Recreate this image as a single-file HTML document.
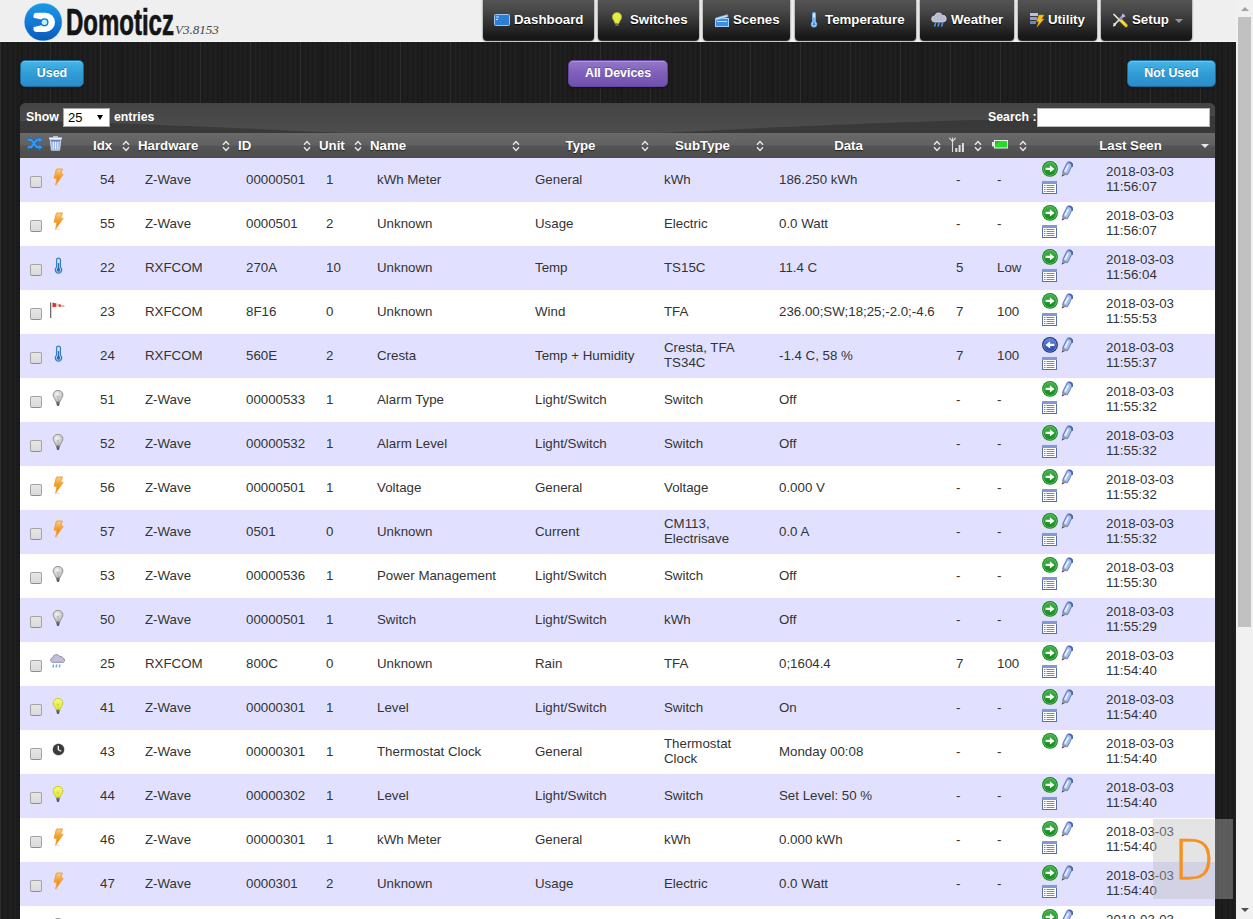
<!DOCTYPE html>
<html lang="en">
<head>
<meta charset="utf-8">
<title>Domoticz</title>
<style>
*{box-sizing:border-box}
html,body{margin:0;padding:0}
body{width:1253px;height:919px;overflow:hidden;position:relative;font-family:"Liberation Sans",Arial,sans-serif;font-size:13.3px;color:#333;
background-color:#1d1d1d;
background-image:repeating-linear-gradient(90deg,rgba(255,255,255,.018) 0 1px,rgba(0,0,0,0) 1px 2px,rgba(0,0,0,.10) 2px 3px,rgba(0,0,0,0) 3px 5px),repeating-linear-gradient(90deg,rgba(255,255,255,.05) 0 1px,rgba(0,0,0,0) 1px 20px,rgba(0,0,0,.12) 20px 22px,rgba(0,0,0,0) 22px 50px)}
#page{position:absolute;left:0;top:0;width:1236px;height:919px;overflow:hidden}
#topbar{position:absolute;left:0;top:0;width:1236px;height:42px;background:#efefef;border-bottom:1px solid #f6f6f6}
#logo{position:absolute;left:24px;top:3px;width:38px;height:38px;overflow:visible}
#brand{position:absolute;left:66px;top:2px;-webkit-text-stroke:.7px #141414;font-weight:bold;font-size:36px;line-height:42px;color:#141414;transform:scaleX(.666);transform-origin:0 0;white-space:nowrap;letter-spacing:0}
#ver{position:absolute;left:175px;top:22px;font-family:"Liberation Serif",Georgia,serif;font-style:italic;font-size:13px;line-height:16px;color:#444;white-space:nowrap}
.nav{position:absolute;top:0;height:41px;border-radius:0 0 4px 4px;background:linear-gradient(#545454 0,#484848 25%,#303030 58%,#191919 88%,#141414 100%);box-shadow:0 0 2px rgba(0,0,0,.75), inset 0 -1px 0 rgba(255,255,255,.10);color:#fff;font-weight:bold;font-size:13.3px;line-height:40px;white-space:nowrap;text-shadow:0 1px 1px #000}
.nav svg{position:absolute;left:11px;top:12px;width:16px;height:16px}
.nav span{position:absolute;top:0}
.btn{position:absolute;top:60px;height:27px;border-radius:5px;color:#fff;font-weight:bold;font-size:12.4px;line-height:24px;text-align:center;text-shadow:0 -1px 0 rgba(0,0,0,.3);box-shadow:inset 0 1px 0 rgba(255,255,255,.25),0 1px 2px rgba(0,0,0,.4)}
.btn.blue{background:linear-gradient(#46b5e5,#319cd6 50%,#2a8dca);border:1px solid #1a6a9c}
.btn.purple{background:linear-gradient(#9278c8,#7d5fba 50%,#7050ae);border:1px solid #6346a0}
#panel{position:absolute;left:20px;top:103px;width:1195px;height:830px;background:#4a4a4a;border-radius:6px 6px 0 0;overflow:hidden}
#pbar{position:absolute;left:0;top:0;width:1195px;height:30px;background:linear-gradient(#3c3c3c,#4e4e4e 45%,#454545 50%,#3b3b3b);color:#fff;font-weight:bold;font-size:12.3px;line-height:28px}
#pbar .show{position:absolute;left:6px;top:0}
#pbar .ent{position:absolute;left:94px;top:0}
#sel{position:absolute;left:43px;top:5px;width:47px;height:19px;background:#fff;border:1px solid #a9a9a9;color:#000;font-weight:normal;font-size:13px;line-height:17px;padding-left:4px;text-shadow:none}
#sel i{position:absolute;right:6px;top:6px;width:0;height:0;border-left:3px solid transparent;border-right:3px solid transparent;border-top:5.500px solid #000}
#pbar .srch{position:absolute;left:968px;top:0}
#sin{position:absolute;left:1017px;top:5px;width:173px;height:19px;background:#fff;border:1px solid #bbb}
table{position:absolute;left:0;top:30px;width:1195px;border-collapse:collapse;table-layout:fixed;border-spacing:0}
th{height:25px;padding:0;background:linear-gradient(#696969,#616161 46%,#545454 54%,#4c4c4c);color:#fff;font-weight:bold;font-size:13.25px;line-height:25px;text-align:left;position:relative;white-space:nowrap;text-shadow:0 1px 1px rgba(0,0,0,.6);overflow:visible}
th .l{position:absolute;left:7px;top:0}
th .c{display:block;text-align:center;padding-right:10px}
th .s{position:absolute;right:1.500px;top:7px;width:8px;height:12px}
td{height:44px;padding:0 0 2px 14px;vertical-align:middle;font-size:13.3px;line-height:15px;color:#333;white-space:nowrap;overflow:hidden}
tr.odd td{background:#e1e1ff}
tr.even td{background:#fff}
td.cd{padding-left:15px}
td.c0{padding:0;position:relative}
.cb{position:absolute;left:10px;top:18px;width:12px;height:12px;border:1px solid #a3a3a3;border-bottom-color:#8e8e8e;border-radius:2px;background:linear-gradient(#e6e6e6,#dadada)}
.di{position:absolute;left:30px;top:10px;width:16px;height:18px}
td.ci{padding:0 0 2px 14px}
td.cc{padding:0 0 2px 14px}
td.cb2{padding:0 0 2px 14px}
td.cl{padding:0;position:relative}
.acts{position:absolute;left:14px;top:3px;line-height:0}
.a16{width:16px;height:16px;vertical-align:top}
.pen{width:12px;height:16px;margin-left:3px;vertical-align:top}
.log{width:15px;height:13px;margin-top:4px;vertical-align:top}
.dt{position:absolute;left:78px;top:6px;line-height:15px}
#sb{position:absolute;left:1236px;top:0;width:17px;height:919px;background:#f1f1f1}
#sb .th{position:absolute;left:2px;top:17px;width:13px;height:610px;background:#c1c1c1}
#sb .up{position:absolute;left:4.5px;top:7px;width:0;height:0;border-left:4px solid transparent;border-right:4px solid transparent;border-bottom:4px solid #a3a3a3}
#sb .dn{position:absolute;left:4.5px;top:908px;width:0;height:0;border-left:4px solid transparent;border-right:4px solid transparent;border-top:4px solid #505050}
#wm{position:absolute;left:1153px;top:819px;width:80px;height:80px;background:rgba(187,187,187,.4)}
#wm svg{position:absolute;left:0;top:0}
</style>
</head>
<body>
<svg width="0" height="0" style="position:absolute">
<defs>
<linearGradient id="lg" x1="0" y1="0" x2="0" y2="1"><stop offset="0" stop-color="#1a9ae6"/><stop offset=".5" stop-color="#137bd6"/><stop offset="1" stop-color="#0d58bd"/></linearGradient>
<linearGradient id="gg" x1="0" y1="0" x2="0" y2="1"><stop offset="0" stop-color="#3fb247"/><stop offset="1" stop-color="#0f8a1c"/></linearGradient>
<linearGradient id="bg" x1="0" y1="0" x2="0" y2="1"><stop offset="0" stop-color="#5e86d6"/><stop offset="1" stop-color="#2a4aa6"/></linearGradient>
<radialGradient id="wg" cx=".4" cy=".35" r=".7"><stop offset="0" stop-color="#f4f4f4"/><stop offset="1" stop-color="#b4b4b4"/></radialGradient><linearGradient id="yg" x1="0" y1="0" x2="0" y2="1"><stop offset="0" stop-color="#f6fb7a"/><stop offset="1" stop-color="#dfe63a"/></linearGradient>
<linearGradient id="og" x1="0" y1="0" x2="0" y2="1"><stop offset="0" stop-color="#fdd08a"/><stop offset=".5" stop-color="#f59a1e"/><stop offset="1" stop-color="#e86e10"/></linearGradient>
<symbol id="i-sort" viewBox="0 0 8 12"><path d="M1 4.8 L4 1.6 L7 4.8" fill="none" stroke="#e8e8e8" stroke-width="1.4"/><path d="M1 7.2 L4 10.4 L7 7.2" fill="none" stroke="#e8e8e8" stroke-width="1.4"/></symbol>
<symbol id="i-go" viewBox="0 0 16 16"><circle cx="8" cy="7.900" r="7.900" fill="#15801f"/><circle cx="8" cy="7.900" r="6.900" fill="#62c766"/><circle cx="8" cy="7.900" r="6.100" fill="url(#gg)"/><path d="M3.600 6.700h4.300V4.300L12.500 7.900l-4.600 3.600V9.100H3.600z" fill="#fff"/></symbol>
<symbol id="i-back" viewBox="0 0 16 16"><circle cx="8" cy="7.900" r="7.900" fill="#1a2c6c"/><circle cx="8" cy="7.900" r="6.800" fill="#6f90dc"/><circle cx="8" cy="7.900" r="6.100" fill="url(#bg)"/><path d="M12.400 6.700H8.100V4.300L3.500 7.900l4.600 3.600V9.100h4.300z" fill="#fff"/></symbol>
<symbol id="i-pen" viewBox="0 0 12 16"><path d="M8.300 3.700 4.700 10.900" stroke="#6680c2" stroke-width="6.600" stroke-linecap="round" fill="none"/><path d="M8.100 4.400 4.900 10.800" stroke="#a9bde9" stroke-width="4.600" stroke-linecap="round" fill="none"/><path d="M7 4.800 4.400 10" stroke="#e9effb" stroke-width="1.700" stroke-linecap="round" fill="none"/><path d="M9.200 1.600a3.200 3.200 0 0 1 2.100 3.400" stroke="#4c68b2" stroke-width="1.800" fill="none" stroke-linecap="round"/><path d="M.8 15.500l1-4.500 4.500 2.300z" fill="#8f8f94"/><path d="M.8 15.500l.4-2 1.800 1z" fill="#48484c"/></symbol>
<symbol id="i-log" viewBox="0 0 15 13"><rect x=".5" y=".5" width="14" height="12" fill="#fff" stroke="#5870a8" stroke-width="1"/><rect x="0" y="0" width="15" height="3" fill="#7f9ad4"/><path d="M2 4.500h1.500M4.500 4.500h8M2 6.500h1.500M4.500 6.500h8M2 8.500h1.500M4.500 8.500h8M2 10.500h1.500M4.500 10.500h8" stroke="#8488a0" stroke-width="1"/></symbol>
<symbol id="i-bolt" viewBox="0 0 16 18"><path d="M6.500 1h6l-2 5.200h2.700L5.700 17l1.300-6.800H4z" fill="url(#og)" stroke="#f0a43c" stroke-width="1" stroke-linejoin="round"/><path d="M4.500 17.300h5" stroke="#d8dcec" stroke-width="1"/></symbol>
<symbol id="i-temp" viewBox="0 0 16 18"><path d="M6.600 4a1.900 1.900 0 0 1 3.800 0v7.300a3.200 3.200 0 1 1-3.800 0z" fill="#d6e8f8" stroke="#3a7fc0" stroke-width="1.300"/><circle cx="8.500" cy="13.900" r="1.900" fill="#2a6fb4"/><path d="M8.500 7v6" stroke="#2a6fb4" stroke-width="1.400"/></symbol>
<symbol id="i-wind" viewBox="0 0 16 18"><path d="M.7 2.500V18" stroke="#555" stroke-width="1.100"/><path d="M2.500 2.600l4 .900v3.300l-4 .5z" fill="#d43a32"/><path d="M6.500 3.500l2.200.6v2.600l-2.200.1z" fill="#f1c9c6"/><path d="M8.700 4.100l2.300.7v1.900l-2.300.1z" fill="#d43a32"/><path d="M11 4.800l1.500.5v1.300l-1.500.1z" fill="#f1c9c6"/><path d="M12.500 5.300l2 .8v.5l-2 0z" fill="#d43a32"/></symbol>
<symbol id="i-off" viewBox="0 0 16 18"><path d="M8 2.400c2.900 0 4.900 2.100 4.900 4.600 0 2.500-2.300 4-3 6.800H6.100c-.7-2.800-3-4.300-3-6.800C3.100 4.500 5.100 2.400 8 2.400z" fill="url(#wg)" stroke="#8e8e8e" stroke-width=".9"/><path d="M8 7.500v5.500M6.500 8l1.500 1.500L9.500 8" fill="none" stroke="#b0b0b0" stroke-width=".7"/><rect x="6.300" y="13.800" width="3.400" height="2.600" fill="#6a6a72"/><path d="M6.900 17h2.200" stroke="#2e2e3a" stroke-width="1.400"/></symbol>
<symbol id="i-on" viewBox="0 0 16 18"><path d="M8 2.400c2.900 0 4.900 2.100 4.900 4.600 0 2.500-2.300 4-3 6.800H6.100c-.7-2.800-3-4.300-3-6.800C3.100 4.500 5.100 2.400 8 2.400z" fill="url(#yg)" stroke="#c4c428" stroke-width=".9"/><path d="M8 7.500v5.500M6.500 8l1.500 1.500L9.500 8" fill="none" stroke="#d8d040" stroke-width=".7"/><rect x="6.300" y="13.800" width="3.400" height="2.600" fill="#6a6a72"/><path d="M6.900 17h2.200" stroke="#2e2e3a" stroke-width="1.400"/></symbol>
<symbol id="i-rain" viewBox="0 0 16 18"><path d="M2.300 10.300a2.300 2.300 0 0 1 .5-4.500 3.600 3.600 0 0 1 6.600-1.600 3 3 0 0 1 3.400 2 2.200 2.200 0 0 1 .6 4.100z" fill="#c4c0da" stroke="#8681a8" stroke-width=".9"/><path d="M3.600 12.500l-.7 3M6.800 12.500l-.7 3M10 12.500l-.7 3" stroke="#78aecb" stroke-width="1.500"/></symbol>
<symbol id="i-clock" viewBox="0 0 16 18"><circle cx="8.500" cy="9.500" r="6.300" fill="#bdbdbd" opacity=".5"/><circle cx="8.500" cy="9.500" r="5.700" fill="#3c3c3c"/><path d="M8.300 5.800v3.900l2.900 1.600" stroke="#fff" stroke-width="1.300" fill="none"/></symbol>
</defs>
</svg>
<div id="page">
<div id="topbar">
<svg id="logo" viewBox="0 0 38 38"><circle cx="19.200" cy="19" r="19.100" fill="#8fd0f6"/><circle cx="19.200" cy="19" r="18.600" fill="url(#lg)"/><path d="M12.700 9.800H21.400A9.550 9.550 0 0 1 21.400 28.900H12.700A3.200 3.200 0 0 1 9.500 25.700V13A3.200 3.200 0 0 1 12.700 9.800Z" fill="#fff"/><path d="M8 14.400 17.500 16.500V22.200L8 24.600Z" fill="#1579d4"/><circle cx="20.400" cy="19.300" r="4.100" fill="#1672cf"/><circle cx="20.400" cy="19.300" r="2.700" fill="#b9f0fd"/></svg>
<div id="brand">Domoticz</div>
<div id="ver">V3.8153</div>
</div>
<div class="nav" style="left:483px;width:111px"><svg viewBox="0 0 16 16"><rect x=".5" y="2.500" width="15" height="11" rx="1" fill="#2b7fd6" stroke="#9cc6f2" stroke-width="1"/><path d="M2 5h3M2 7.500h2" stroke="#d6ebff" stroke-width="1"/></svg><span style="left:31px">Dashboard</span></div>
<div class="nav" style="left:598px;width:101px"><svg viewBox="0 0 16 16"><path d="M8 .6c2.700 0 4.600 2 4.600 4.400 0 2.400-2.200 3.800-2.800 6.500H6.200C5.600 8.800 3.400 7.400 3.400 5 3.400 2.600 5.300.6 8 .6z" fill="#e4ea4a" stroke="#b4bb24" stroke-width=".8"/><rect x="6.400" y="11.600" width="3.200" height="2.600" fill="#6e6e66"/><path d="M6.900 15h2.200" stroke="#26262a" stroke-width="1.400"/></svg><span style="left:32px">Switches</span></div>
<div class="nav" style="left:703px;width:87px"><svg viewBox="0 0 16 16"><rect x="1.500" y="6.500" width="13" height="8" fill="#3f8ee6" stroke="#a9d0f8" stroke-width="1"/><path d="M1.500 6l12-3.500.6 2.200-12 3.500z" fill="#cfe4fb" stroke="#5a9be6" stroke-width=".6"/><path d="M3 9.500h10" stroke="#bcdcff" stroke-width="1"/></svg><span style="left:30px">Scenes</span></div>
<div class="nav" style="left:795px;width:121px"><svg viewBox="0 0 16 16"><path d="M6.600 2a1.400 1.400 0 0 1 2.800 0v8a2.700 2.700 0 1 1-2.800 0z" fill="#e4f0fc" stroke="#6fb0ee" stroke-width="1.100"/><circle cx="8" cy="12.300" r="1.500" fill="#3b86d8"/><path d="M8 5.500v6" stroke="#3b86d8" stroke-width="1.100"/></svg><span style="left:30px">Temperature</span></div>
<div class="nav" style="left:920px;width:94px"><svg viewBox="0 0 16 16"><path d="M3.500 10a3 3 0 0 1 .3-6 4 4 0 0 1 7.600-.6 3.200 3.200 0 0 1 1 6.600z" fill="#b9bdd2" stroke="#d9dcea" stroke-width=".8"/><path d="M4.500 11.500l-.8 2.500M8 11.500l-.8 2.500M11.500 11.500l-.8 2.500" stroke="#4e9cf0" stroke-width="1.500" stroke-linecap="round"/></svg><span style="left:31px">Weather</span></div>
<div class="nav" style="left:1018px;width:79px"><svg viewBox="0 0 16 16"><rect x="1" y="1" width="8" height="3" fill="#b8c2dc"/><rect x="1" y="5" width="7" height="3" fill="#8da0d0"/><rect x="1" y="9" width="6" height="3" fill="#6f86c4"/><path d="M10 3h5l-2.500 4h2.500L8 15l1.800-5.500H7.500z" fill="#f6c11c" stroke="#d99a0a" stroke-width=".5"/></svg><span style="left:30px">Utility</span></div>
<div class="nav" style="left:1101px;width:91px"><svg viewBox="0 0 16 16"><path d="M2 2.500 8.500 9" stroke="#e9e9e9" stroke-width="1.700" stroke-linecap="round"/><path d="M8 7.500 14 13.500" stroke="#e8c21c" stroke-width="3.200" stroke-linecap="round"/><path d="M8.500 8 13 12.500" stroke="#f7e36a" stroke-width="1.100" stroke-linecap="round"/><path d="M3 12 8.500 6.500" stroke="#e4e4e4" stroke-width="1.700" stroke-linecap="round"/><path d="M1.200 11.800l1.800.2.200 1.800M1.300 14.300l1.500-1.500" stroke="#ededed" stroke-width="1.300" fill="none"/><path d="M8.500 6.500 11.500 3.500" stroke="#9a8fd0" stroke-width="2.600" stroke-linecap="round"/><path d="M10.800 1.800v2.400h2.400" stroke="#c9c2ee" stroke-width="1.200" fill="none"/></svg><span style="left:31px">Setup</span><i style="position:absolute;left:73.500px;top:19px;width:0;height:0;border-left:4px solid transparent;border-right:4px solid transparent;border-top:4px solid #959595"></i></div>

<div class="btn blue" style="left:20px;width:64px">Used</div>
<div class="btn purple" style="left:568px;width:100px">All Devices</div>
<div class="btn blue" style="left:1127px;width:89px">Not Used</div>

<div id="panel">
<div id="pbar"><svg style="position:absolute;left:0;top:0" width="1195" height="30" viewBox="0 0 1195 30"><defs><linearGradient id="pg" x1="0" y1="0" x2="0" y2="1"><stop offset="0" stop-color="#444"/><stop offset="1" stop-color="#4d4d4d"/></linearGradient></defs><rect width="1195" height="30" fill="url(#pg)"/><path d="M0 18C120 20 230 26 330 30H0Z" fill="#393939"/><path d="M640 30C800 22 950 15 1195 13V30Z" fill="#393939"/></svg><span class="show">Show</span><span id="sel">25<i></i></span><span class="ent">entries</span><span class="srch">Search :</span><span id="sin"></span></div>
<table>
<colgroup><col style="width:66px"><col style="width:45px"><col style="width:100px"><col style="width:81px"><col style="width:51px"><col style="width:158px"><col style="width:129px"><col style="width:115px"><col style="width:177px"><col style="width:41px"><col style="width:45px"><col style="width:187px"></colgroup>
<thead><tr>
<th><svg style="position:absolute;left:7px;top:3px;width:16px;height:15px" viewBox="0 0 16 15"><path d="M.8 3.800h3.400l5.600 7.400h3M.8 11.200h3.400l5.600-7.400h3" fill="none" stroke="#1d6fc0" stroke-width="3.200"/><path d="M11.600 0l4.400 3.800-4.400 3.800zM11.600 7.400l4.400 3.800-4.400 3.800z" fill="#1d6fc0"/><path d="M.8 3.800h3.400l5.600 7.400h3M.8 11.200h3.400l5.600-7.400h3" fill="none" stroke="#3a9cee" stroke-width="1.800"/><path d="M12.200 1.400l2.800 2.400-2.800 2.400zM12.200 8.800l2.800 2.400-2.800 2.400z" fill="#3a9cee"/></svg><svg style="position:absolute;left:28px;top:3px;width:15px;height:15px" viewBox="0 0 15 15"><path d="M1 2.300h13" stroke="#eef2fa" stroke-width="1.800"/><path d="M5 .9h5" stroke="#dfe6f4" stroke-width="1.400"/><path d="M2.200 3.600h10.600l-1.200 10.600H3.400z" fill="#9db6e2" stroke="#d5def2" stroke-width=".9"/><path d="M5.300 5v8M7.500 5v8M9.700 5v8" stroke="#e6edfb" stroke-width="1.100"/><path d="M2.800 4.100h9.400l-.2 1.500H3z" fill="#5d7fc4"/></svg></th>
<th><span class="l">Idx</span><svg class="s"><use href="#i-sort"/></svg></th>
<th><span class="l">Hardware</span><svg class="s"><use href="#i-sort"/></svg></th>
<th><span class="l">ID</span><svg class="s"><use href="#i-sort"/></svg></th>
<th><span class="l">Unit</span><svg class="s"><use href="#i-sort"/></svg></th>
<th><span class="l">Name</span><svg class="s"><use href="#i-sort"/></svg></th>
<th><span class="c">Type</span><svg class="s"><use href="#i-sort"/></svg></th>
<th><span class="c">SubType</span><svg class="s"><use href="#i-sort"/></svg></th>
<th><span class="c">Data</span><svg class="s"><use href="#i-sort"/></svg></th>
<th><svg style="position:absolute;left:7px;top:4px;width:16px;height:16px" viewBox="0 0 16 16"><path d="M3.500 .5v14.500M.3 .8l3.200 3.600 3.200-3.600" fill="none" stroke="#dcdcdc" stroke-width="1.100"/><path d="M7.300 11v4M10.600 8v7M13.900 6v9" stroke="#e2e2e2" stroke-width="2"/></svg><svg class="s"><use href="#i-sort"/></svg></th>
<th><svg style="position:absolute;left:9px;top:7px;width:16px;height:8.500px" viewBox="0 0 16 8.500"><rect x="0" y="2" width="2.500" height="4.500" fill="#e8e8e8"/><rect x="2.500" y=".5" width="13" height="7.500" fill="#25dd25" stroke="#efefef" stroke-width="1"/><path d="M3 1h5L3 5z" fill="#1a9a1a" opacity=".55"/></svg><svg class="s"><use href="#i-sort"/></svg></th>
<th><span class="c" style="padding-right:0;padding-left:18px">Last Seen</span><i style="position:absolute;right:6px;top:11px;width:0;height:0;border-left:4px solid transparent;border-right:4px solid transparent;border-top:4px solid #e8e8e8"></i></th>
</tr></thead>
<tbody>

<tr class="odd"><td class="c0"><span class="cb"></span><svg class="di"><use href="#i-bolt"/></svg></td><td class="ci">54</td><td>Z-Wave</td><td class="cd">00000501</td><td>1</td><td>kWh Meter</td><td>General</td><td>kWh</td><td>186.250 kWh</td><td class="cc">-</td><td class="cb2">-</td><td class="cl"><span class="acts"><svg class="a16"><use href="#i-go"/></svg><svg class="pen"><use href="#i-pen"/></svg><br><svg class="log"><use href="#i-log"/></svg></span><span class="dt">2018-03-03<br>11:56:07</span></td></tr>
<tr class="even"><td class="c0"><span class="cb"></span><svg class="di"><use href="#i-bolt"/></svg></td><td class="ci">55</td><td>Z-Wave</td><td class="cd">0000501</td><td>2</td><td>Unknown</td><td>Usage</td><td>Electric</td><td>0.0 Watt</td><td class="cc">-</td><td class="cb2">-</td><td class="cl"><span class="acts"><svg class="a16"><use href="#i-go"/></svg><svg class="pen"><use href="#i-pen"/></svg><br><svg class="log"><use href="#i-log"/></svg></span><span class="dt">2018-03-03<br>11:56:07</span></td></tr>
<tr class="odd"><td class="c0"><span class="cb"></span><svg class="di"><use href="#i-temp"/></svg></td><td class="ci">22</td><td>RXFCOM</td><td class="cd">270A</td><td>10</td><td>Unknown</td><td>Temp</td><td>TS15C</td><td>11.4 C</td><td class="cc">5</td><td class="cb2">Low</td><td class="cl"><span class="acts"><svg class="a16"><use href="#i-go"/></svg><svg class="pen"><use href="#i-pen"/></svg><br><svg class="log"><use href="#i-log"/></svg></span><span class="dt">2018-03-03<br>11:56:04</span></td></tr>
<tr class="even"><td class="c0"><span class="cb"></span><svg class="di"><use href="#i-wind"/></svg></td><td class="ci">23</td><td>RXFCOM</td><td class="cd">8F16</td><td>0</td><td>Unknown</td><td>Wind</td><td>TFA</td><td>236.00;SW;18;25;-2.0;-4.6</td><td class="cc">7</td><td class="cb2">100</td><td class="cl"><span class="acts"><svg class="a16"><use href="#i-go"/></svg><svg class="pen"><use href="#i-pen"/></svg><br><svg class="log"><use href="#i-log"/></svg></span><span class="dt">2018-03-03<br>11:55:53</span></td></tr>
<tr class="odd"><td class="c0"><span class="cb"></span><svg class="di"><use href="#i-temp"/></svg></td><td class="ci">24</td><td>RXFCOM</td><td class="cd">560E</td><td>2</td><td>Cresta</td><td>Temp + Humidity</td><td>Cresta, TFA<br>TS34C</td><td>-1.4 C, 58 %</td><td class="cc">7</td><td class="cb2">100</td><td class="cl"><span class="acts"><svg class="a16"><use href="#i-back"/></svg><svg class="pen"><use href="#i-pen"/></svg><br><svg class="log"><use href="#i-log"/></svg></span><span class="dt">2018-03-03<br>11:55:37</span></td></tr>
<tr class="even"><td class="c0"><span class="cb"></span><svg class="di"><use href="#i-off"/></svg></td><td class="ci">51</td><td>Z-Wave</td><td class="cd">00000533</td><td>1</td><td>Alarm Type</td><td>Light/Switch</td><td>Switch</td><td>Off</td><td class="cc">-</td><td class="cb2">-</td><td class="cl"><span class="acts"><svg class="a16"><use href="#i-go"/></svg><svg class="pen"><use href="#i-pen"/></svg><br><svg class="log"><use href="#i-log"/></svg></span><span class="dt">2018-03-03<br>11:55:32</span></td></tr>
<tr class="odd"><td class="c0"><span class="cb"></span><svg class="di"><use href="#i-off"/></svg></td><td class="ci">52</td><td>Z-Wave</td><td class="cd">00000532</td><td>1</td><td>Alarm Level</td><td>Light/Switch</td><td>Switch</td><td>Off</td><td class="cc">-</td><td class="cb2">-</td><td class="cl"><span class="acts"><svg class="a16"><use href="#i-go"/></svg><svg class="pen"><use href="#i-pen"/></svg><br><svg class="log"><use href="#i-log"/></svg></span><span class="dt">2018-03-03<br>11:55:32</span></td></tr>
<tr class="even"><td class="c0"><span class="cb"></span><svg class="di"><use href="#i-bolt"/></svg></td><td class="ci">56</td><td>Z-Wave</td><td class="cd">00000501</td><td>1</td><td>Voltage</td><td>General</td><td>Voltage</td><td>0.000 V</td><td class="cc">-</td><td class="cb2">-</td><td class="cl"><span class="acts"><svg class="a16"><use href="#i-go"/></svg><svg class="pen"><use href="#i-pen"/></svg><br><svg class="log"><use href="#i-log"/></svg></span><span class="dt">2018-03-03<br>11:55:32</span></td></tr>
<tr class="odd"><td class="c0"><span class="cb"></span><svg class="di"><use href="#i-bolt"/></svg></td><td class="ci">57</td><td>Z-Wave</td><td class="cd">0501</td><td>0</td><td>Unknown</td><td>Current</td><td>CM113,<br>Electrisave</td><td>0.0 A</td><td class="cc">-</td><td class="cb2">-</td><td class="cl"><span class="acts"><svg class="a16"><use href="#i-go"/></svg><svg class="pen"><use href="#i-pen"/></svg><br><svg class="log"><use href="#i-log"/></svg></span><span class="dt">2018-03-03<br>11:55:32</span></td></tr>
<tr class="even"><td class="c0"><span class="cb"></span><svg class="di"><use href="#i-off"/></svg></td><td class="ci">53</td><td>Z-Wave</td><td class="cd">00000536</td><td>1</td><td>Power Management</td><td>Light/Switch</td><td>Switch</td><td>Off</td><td class="cc">-</td><td class="cb2">-</td><td class="cl"><span class="acts"><svg class="a16"><use href="#i-go"/></svg><svg class="pen"><use href="#i-pen"/></svg><br><svg class="log"><use href="#i-log"/></svg></span><span class="dt">2018-03-03<br>11:55:30</span></td></tr>
<tr class="odd"><td class="c0"><span class="cb"></span><svg class="di"><use href="#i-off"/></svg></td><td class="ci">50</td><td>Z-Wave</td><td class="cd">00000501</td><td>1</td><td>Switch</td><td>Light/Switch</td><td>kWh</td><td>Off</td><td class="cc">-</td><td class="cb2">-</td><td class="cl"><span class="acts"><svg class="a16"><use href="#i-go"/></svg><svg class="pen"><use href="#i-pen"/></svg><br><svg class="log"><use href="#i-log"/></svg></span><span class="dt">2018-03-03<br>11:55:29</span></td></tr>
<tr class="even"><td class="c0"><span class="cb"></span><svg class="di"><use href="#i-rain"/></svg></td><td class="ci">25</td><td>RXFCOM</td><td class="cd">800C</td><td>0</td><td>Unknown</td><td>Rain</td><td>TFA</td><td>0;1604.4</td><td class="cc">7</td><td class="cb2">100</td><td class="cl"><span class="acts"><svg class="a16"><use href="#i-go"/></svg><svg class="pen"><use href="#i-pen"/></svg><br><svg class="log"><use href="#i-log"/></svg></span><span class="dt">2018-03-03<br>11:54:40</span></td></tr>
<tr class="odd"><td class="c0"><span class="cb"></span><svg class="di"><use href="#i-on"/></svg></td><td class="ci">41</td><td>Z-Wave</td><td class="cd">00000301</td><td>1</td><td>Level</td><td>Light/Switch</td><td>Switch</td><td>On</td><td class="cc">-</td><td class="cb2">-</td><td class="cl"><span class="acts"><svg class="a16"><use href="#i-go"/></svg><svg class="pen"><use href="#i-pen"/></svg><br><svg class="log"><use href="#i-log"/></svg></span><span class="dt">2018-03-03<br>11:54:40</span></td></tr>
<tr class="even"><td class="c0"><span class="cb"></span><svg class="di"><use href="#i-clock"/></svg></td><td class="ci">43</td><td>Z-Wave</td><td class="cd">00000301</td><td>1</td><td>Thermostat Clock</td><td>General</td><td>Thermostat<br>Clock</td><td>Monday 00:08</td><td class="cc">-</td><td class="cb2">-</td><td class="cl"><span class="acts"><svg class="a16"><use href="#i-go"/></svg><svg class="pen"><use href="#i-pen"/></svg></span><span class="dt">2018-03-03<br>11:54:40</span></td></tr>
<tr class="odd"><td class="c0"><span class="cb"></span><svg class="di"><use href="#i-on"/></svg></td><td class="ci">44</td><td>Z-Wave</td><td class="cd">00000302</td><td>1</td><td>Level</td><td>Light/Switch</td><td>Switch</td><td>Set Level: 50 %</td><td class="cc">-</td><td class="cb2">-</td><td class="cl"><span class="acts"><svg class="a16"><use href="#i-go"/></svg><svg class="pen"><use href="#i-pen"/></svg><br><svg class="log"><use href="#i-log"/></svg></span><span class="dt">2018-03-03<br>11:54:40</span></td></tr>
<tr class="even"><td class="c0"><span class="cb"></span><svg class="di"><use href="#i-bolt"/></svg></td><td class="ci">46</td><td>Z-Wave</td><td class="cd">00000301</td><td>1</td><td>kWh Meter</td><td>General</td><td>kWh</td><td>0.000 kWh</td><td class="cc">-</td><td class="cb2">-</td><td class="cl"><span class="acts"><svg class="a16"><use href="#i-go"/></svg><svg class="pen"><use href="#i-pen"/></svg><br><svg class="log"><use href="#i-log"/></svg></span><span class="dt">2018-03-03<br>11:54:40</span></td></tr>
<tr class="odd"><td class="c0"><span class="cb"></span><svg class="di"><use href="#i-bolt"/></svg></td><td class="ci">47</td><td>Z-Wave</td><td class="cd">0000301</td><td>2</td><td>Unknown</td><td>Usage</td><td>Electric</td><td>0.0 Watt</td><td class="cc">-</td><td class="cb2">-</td><td class="cl"><span class="acts"><svg class="a16"><use href="#i-go"/></svg><svg class="pen"><use href="#i-pen"/></svg><br><svg class="log"><use href="#i-log"/></svg></span><span class="dt">2018-03-03<br>11:54:40</span></td></tr>
<tr class="even"><td class="c0"><span class="cb"></span><svg class="di"><use href="#i-off"/></svg></td><td class="ci">48</td><td>Z-Wave</td><td class="cd">00000303</td><td>1</td><td>Switch</td><td>Light/Switch</td><td>Switch</td><td>Off</td><td class="cc">-</td><td class="cb2">-</td><td class="cl"><span class="acts"><svg class="a16"><use href="#i-go"/></svg><svg class="pen"><use href="#i-pen"/></svg><br><svg class="log"><use href="#i-log"/></svg></span><span class="dt">2018-03-03<br>11:54:40</span></td></tr>
</tbody>
</table>
</div>
<div id="wm"><svg width="80" height="80" viewBox="0 0 80 80"><text x="0" y="0" transform="translate(20.200 60.400) scale(.97 1)" font-family="DejaVu Sans Light, DejaVu Sans, Liberation Sans, sans-serif" font-weight="200" font-size="55.500" fill="#f7901e" stroke="#f7901e" stroke-width=".5">D</text></svg></div>
</div>
<div id="sb"><div class="up"></div><div class="th"></div><div class="dn"></div></div>
</body>
</html>
